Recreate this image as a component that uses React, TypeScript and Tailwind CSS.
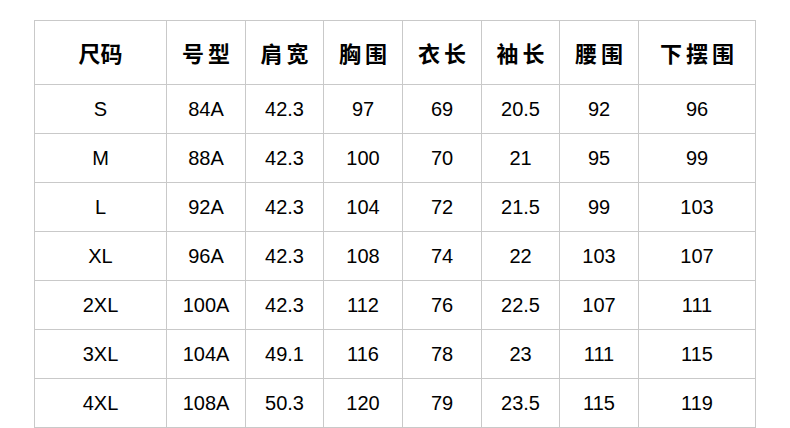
import React from "react";

const headers = ["尺码", "号型", "肩宽", "胸围", "衣长", "袖长", "腰围", "下摆围"];
const rows = [
  ["S", "84A", "42.3", "97", "69", "20.5", "92", "96"],
  ["M", "88A", "42.3", "100", "70", "21", "95", "99"],
  ["L", "92A", "42.3", "104", "72", "21.5", "99", "103"],
  ["XL", "96A", "42.3", "108", "74", "22", "103", "107"],
  ["2XL", "100A", "42.3", "112", "76", "22.5", "107", "111"],
  ["3XL", "104A", "49.1", "116", "78", "23", "111", "115"],
  ["4XL", "108A", "50.3", "120", "79", "23.5", "115", "119"],
];

export default function App() {
  return (
    <div className="w-[790px] h-[428px] bg-white overflow-hidden">
      <div className="ml-[34px] mt-[20px] inline-grid grid-cols-[131px_78px_77px_78px_78px_77px_78px_116px] grid-rows-[63px_repeat(7,48px)] gap-px p-px bg-[#c9c9c9]">
        {headers.map((h, i) => (
          <div
            key={h}
            className={`bg-white flex items-center justify-center text-[22px] font-bold text-black ${i === 0 ? "" : "tracking-[4px] pl-[4px]"}`}
            style={{ fontFamily: '"Noto Sans CJK SC", "Noto Sans", sans-serif' }}
          >
            {h}
          </div>
        ))}
        {rows.map((r) =>
          r.map((c, j) => (
            <div
              key={r[0] + j}
              className="bg-white flex items-center justify-center text-[20px] text-black"
              style={{ fontFamily: '"Liberation Sans", Arial, sans-serif' }}
            >
              {c}
            </div>
          ))
        )}
      </div>
    </div>
  );
}
